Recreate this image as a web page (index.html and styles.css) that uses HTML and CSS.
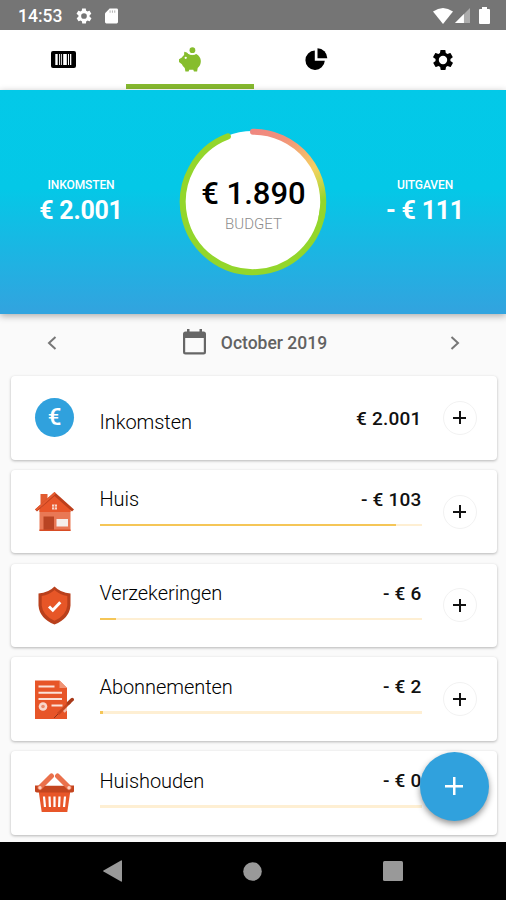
FILE: index.html
```html
<!DOCTYPE html>
<html lang="nl">
<head>
<meta charset="utf-8">
<title>Budget</title>
<link rel="stylesheet" href="styles.css">
</head>
<body>
<div class="app">
  <header class="status">
    <span class="clock">14:53</span>
    <svg class="st-gear" viewBox="0 0 24 24"><path fill-rule="evenodd" d="M19.4 13c0-.3.1-.6.1-1s0-.7-.1-1l2.1-1.6c.2-.2.3-.4.1-.7l-2-3.400c-.1-.3-.4-.3-.6-.3l-2.500 1c-.5-.4-1.100-.7-1.700-1l-.4-2.600c0-.3-.2-.4-.5-.4h-4c-.2 0-.5.2-.5.4l-.4 2.600c-.6.300-1.200.6-1.700 1l-2.500-1c-.2-.1-.5 0-.6.300l-2 3.400c-.1.200-.1.500.1.700L4.600 11c0 .3-.1.600-.1 1s0 .7.1 1l-2.100 1.600c-.2.200-.3.400-.1.700l2 3.400c.1.300.4.300.6.300l2.500-1c.5.400 1.100.7 1.700 1l.4 2.600c0 .3.200.4.500.4h4c.2 0 .5-.2.500-.4l.4-2.600c.6-.3 1.200-.6 1.700-1l2.500 1c.2.100.5 0 .6-.3l2-3.400c.1-.2.1-.5-.1-.7zM12 15.800a3.800 3.800 0 1 1 0-7.600 3.800 3.800 0 0 1 0 7.600z"/></svg>
    <svg class="st-card" viewBox="0 0 14 16"><path d="M5 0h7.500Q14 0 14 1.500v13q0 1.500-1.500 1.500h-11Q0 16 0 14.500V5z"/><path class="slots" d="M5.500 2v2.500M8 2v2.500M10.500 2v2.500"/></svg>
    <span class="spacer"></span>
    <svg class="st-wifi" viewBox="0 0 20 16"><path d="M0 3.500Q10-3.500 20 3.500L10 16z"/></svg>
    <svg class="st-signal" viewBox="0 0 16 16"><path opacity=".4" d="M16 0v16H0z"/><path d="M9.500 6.500V16H0z"/></svg>
    <svg class="st-battery" viewBox="0 0 11 17"><path d="M3 0h5v2h2q1 0 1 1v13q0 1-1 1H1q-1 0-1-1V3q0-1 1-1h2z"/></svg>
  </header>

  <nav class="tabs">
    <div class="tab"><svg width="25" height="17" viewBox="0 0 25 17"><rect width="25" height="17" rx="2"/><path fill="#fff" d="M4.300 3h2.400v11H4.300zM8 3h.9v11H8zM9.900 3h.9v11h-.9zM12.200 3h3.600v11h-3.600zM17 3h1v11h-1zM19 3h1.300v11H19z"/></svg></div>
    <div class="tab active"><svg width="23" height="25" viewBox="0 0 24 26" fill="#86bd2d"><circle cx="14" cy="3.300" r="3"/><path d="M5.500 5q3 .3 4.500 2.200 4 1.800 8 0 4.500 2.500 4.800 7.300 0 4.500-3.300 7.300l-.6 3.700h-3.300l-.7-1.800h-4.200L10 25.500H6.700L6 21.800q-2-1.300-3-3.800L0 15.500v-2.800L3 11q.8-1.500 2.300-2.600z"/><path d="M9.600 6.500Q14 9.300 18.400 6.300" fill="none" stroke="#fff" stroke-width="1"/><circle cx="7" cy="11.300" r="1.200" fill="#fff"/></svg></div>
    <div class="tab"><svg width="23" height="23" viewBox="0 0 23 23"><path d="M9.800 2.500v10.300h10A9.700 9.700 0 1 1 9.800 2.500z"/><path d="M12.500.3a10 10 0 0 1 9.800 9.900h-9.800z"/></svg></div>
    <div class="tab"><svg width="24" height="24" viewBox="0 0 24 24"><path fill-rule="evenodd" d="M19.400 13c0-.3.100-.6.100-1s0-.7-.1-1l2.100-1.600c.2-.2.300-.4.100-.7l-2-3.400c-.1-.3-.4-.3-.6-.3l-2.500 1c-.5-.4-1.100-.7-1.700-1l-.4-2.600c0-.3-.2-.4-.5-.4h-4c-.2 0-.5.200-.5.4l-.4 2.600c-.6.300-1.200.6-1.700 1l-2.500-1c-.2-.1-.5 0-.6.300l-2 3.400c-.1.200-.1.500.1.700L4.600 11c0 .3-.1.600-.1 1s0 .7.100 1l-2.100 1.600c-.2.200-.3.400-.1.700l2 3.400c.1.300.4.300.6.300l2.500-1c.5.400 1.100.7 1.700 1l.4 2.600c0 .3.200.4.500.4h4c.2 0 .5-.2.500-.4l.4-2.600c.6-.3 1.200-.6 1.700-1l2.500 1c.2.100.5 0 .6-.3l2-3.400c.1-.2.100-.5-.1-.7zM12 16.200a4.200 4.200 0 1 1 0-8.400 4.200 4.200 0 0 1 0 8.400z"/></svg></div>
  </nav>

  <section class="hero">
    <div class="stat"><span class="stat-label">INKOMSTEN</span><span class="stat-value">€ 2.001</span></div>
    <div class="ring">
      <svg class="ring-art" viewBox="0 0 148 148">
        <defs><linearGradient id="warm" gradientUnits="userSpaceOnUse" x1="74" y1="3" x2="118" y2="86"><stop offset="0" stop-color="#ef8780"/><stop offset=".25" stop-color="#f2947a"/><stop offset=".65" stop-color="#f5cf62"/><stop offset=".78" stop-color="#d9d44d"/><stop offset="1" stop-color="#93d62b"/></linearGradient></defs>
        <circle cx="74" cy="74" r="71" fill="#fff"/>
        <g fill="none" stroke-width="6" stroke-linecap="round">
          <path stroke="#93d62b" d="M143.900 80.100A70.200 70.200 0 1 1 48.900 8.400"/>
          <path stroke="url(#warm)" d="M74 3.800A70.200 70.200 0 0 1 142.500 89.500"/>
        </g>
      </svg>
      <div class="ring-text"><span class="ring-value">€ 1.890</span><span class="ring-label">BUDGET</span></div>
    </div>
    <div class="stat"><span class="stat-label">UITGAVEN</span><span class="stat-value">- € 111</span></div>
  </section>

  <main class="content">
    <div class="month">
      <svg class="chev" viewBox="0 0 10 14"><path d="M8.500 1 2 7l6.500 6"/></svg>
      <div class="month-name"><svg width="23" height="26" viewBox="0 0 23 26"><path fill="#666" fill-rule="evenodd" d="M4 0h2.500v2.500h10V0H19v2.500h1.500Q23 2.500 23 5v18q0 2.500-2.500 2.500h-18Q0 25.500 0 23V5q0-2.500 2.500-2.500H4zM2.200 9v14.300h18.600V9z"/></svg><span>October 2019</span></div>
      <svg class="chev" viewBox="0 0 10 14"><path d="m1.500 1 6.500 6-6.500 6"/></svg>
    </div>

    <div class="cards">
      <article class="card income">
        <div class="euro">€</div>
        <div class="body"><div class="line"><span class="name">Inkomsten</span><span class="amount">€ 2.001</span></div></div>
        <div class="add"></div>
      </article>

      <article class="card">
        <svg class="icon" viewBox="0 0 39 39"><path fill="#e15b30" d="M5.500 2h7v10h-7z"/><path fill="#e97855" d="M4.500 16h31v23h-31z"/><path fill="#e8562a" d="m19.500 2 16 15v3h-31v-3z"/><path fill="#bd3f1c" d="m19.500 0 19.500 17.500-2 2L19.500 4 2 19.500l-2-2z"/><path fill="#e65b30" d="m19.500 0 1.500 1.500L2 18.500l-2-1z"/><path fill="#b94423" d="M8.500 24.500H19V39H8.500z"/><path fill="#d74c24" d="M4.500 37.500h31V39h-31z"/><path fill="#f5efec" d="M21.500 27H33v7.500H21.500z"/><path fill="#f7d9ce" d="M17 12.500h5v5h-5z"/><path stroke="#e8562a" stroke-width=".7" d="M19.500 12.500v5M17 15h5"/></svg>
        <div class="body"><div class="line"><span class="name">Huis</span><span class="amount">- € 103</span></div><div class="bar"><div class="fill" style="width:92%"></div></div></div>
        <div class="add"></div>
      </article>

      <article class="card">
        <svg class="icon" viewBox="0 0 39 39"><path fill="#b9401c" d="M19.500.5q6 6.300 16 7v12q-1 13-16 19-15-6-16-19v-12q10-.7 16-7z"/><path fill="#e75627" d="M19.500 4q5.500 5 12.800 6v9.500q-1 10-12.800 15.300Q7.700 29.500 6.700 19.500V10q7.300-1 12.800-6z"/><path fill="none" stroke="#fff" stroke-width="3" d="m14 20.500 3.800 3.700 7.500-8"/></svg>
        <div class="body"><div class="line"><span class="name">Verzekeringen</span><span class="amount">- € 6</span></div><div class="bar"><div class="fill" style="width:5%"></div></div></div>
        <div class="add"></div>
      </article>

      <article class="card">
        <svg class="icon" viewBox="0 0 39 39"><path fill="#e75528" d="M0 .5h24.500L32 8v31H0z"/><path fill="#ef9476" d="M24.500.5 32 8h-7.500z"/><path stroke="#fbe1d7" stroke-width="2" d="M3.500 6.500h16M3.500 12.800H27M3.500 19H27M16.500 25.500h11"/><circle cx="8" cy="26.500" r="4.300" fill="#f9d8cc"/><circle cx="8" cy="26.500" r="1.800" fill="#ed8c6c"/><path stroke="#fff" stroke-width="5" d="m28 31 5-5" opacity=".6"/><path stroke="#c8451e" stroke-width="2.800" d="m23 34 12-12"/><path stroke="#a83a1a" stroke-width="3.500" stroke-linecap="round" d="m33.500 23 3.700-3.500"/><path stroke="#8f351d" d="m19 38 4-4"/></svg>
        <div class="body"><div class="line"><span class="name">Abonnementen</span><span class="amount">- € 2</span></div><div class="bar"><div class="fill" style="width:1%"></div></div></div>
        <div class="add"></div>
      </article>

      <article class="card">
        <svg class="icon" viewBox="0 0 39 39"><path fill="#e85629" d="M3.500 17h32L32.300 39H6.700z"/><path fill="#c4451f" d="M0 12.500h39v6q-1 1-2 1H2q-1 0-2-1z"/><path fill="#fff" d="M19.500 5 9 12.500h21z"/><path stroke="#ea704b" stroke-width="5" stroke-linecap="round" d="M5 14.500 16.500 3M34 14.500 22.500 3"/><path stroke="#fff" stroke-width="2.200" d="M9 23.500 10 34M14.500 23.500l.4 10.500M19.500 23.500V34M24.500 23.500l-.4 10.500M30 23.500 29 34"/><circle cx="5" cy="14.700" r="1.700" fill="#ffd1c0"/><circle cx="34" cy="14.700" r="1.700" fill="#ffd1c0"/></svg>
        <div class="body"><div class="line"><span class="name">Huishouden</span><span class="amount">- € 0</span></div><div class="bar"><div class="fill" style="width:0%"></div></div></div>
        <div class="add"></div>
      </article>
    </div>
    <div class="fab"></div>
  </main>

  <footer class="navbar">
    <svg width="19" height="22" viewBox="0 0 19 22"><path d="M18 .5q1-.5 1 .5v20q0 1-1 .5L.5 11.500q-.8-.5 0-1z"/></svg>
    <svg width="19" height="19" viewBox="0 0 19 19"><circle cx="9.500" cy="9.500" r="9.300"/></svg>
    <svg width="20" height="20" viewBox="0 0 20 20"><rect width="20" height="20" rx="1.500"/></svg>
  </footer>
</div>
</body>
</html>
```
FILE: styles.css
```css
* { box-sizing: border-box; }
body { margin: 0; font-family: Roboto, sans-serif; color: #111; }
svg { display: block; flex: none; }
.app { width: 506px; height: 900px; display: flex; flex-direction: column; background: #fafafa; overflow: hidden; }

.status { height: 30px; flex: none; background: #757575; display: flex; align-items: center; padding: 1px 16px 0 18px; fill: #fff; color: #fff; }
.clock { font-size: 17.500px; font-weight: 500; width: 57px; line-height: 28px; }
.st-gear { width: 18px; height: 18px; margin-right: 12px; }
.st-card { width: 13px; height: 16px; }
.slots { stroke: #aaa; stroke-width: 1; }
.spacer { flex: 1; }
.st-wifi { width: 20px; height: 16px; }
.st-signal { width: 15px; height: 15px; margin: 0 9px 0 2px; }
.st-battery { width: 11px; height: 17px; }

.tabs { height: 59.500px; flex: none; display: flex; background: #fff; }
.tab { flex: 1; display: flex; align-items: center; justify-content: center; }
.tab.active { border-bottom: 5px solid #86b92f; padding: 5px 0 0 1px; height: 59px; }

.hero { height: 224.500px; flex: none; display: flex; justify-content: space-between; align-items: center; background: linear-gradient(#03c9e8 0%, #04c8e7 44%, #31a4df 98%); box-shadow: 0 2px 7px rgba(0,0,0,.32); position: relative; }
.stat { width: 162px; display: flex; flex-direction: column; align-items: center; color: #fff; padding-top: 3px; }
.stat-label { font-size: 12px; line-height: 16px; font-weight: 500; letter-spacing: -.1px; }
.stat-value { font-size: 25px; line-height: 36px; font-weight: 700; letter-spacing: -.25px; }
.ring { width: 148px; height: 148px; display: grid; }
.ring-art, .ring-text { grid-area: 1 / 1; width: 148px; height: 148px; }
.ring-text { display: flex; flex-direction: column; align-items: center; padding: 48px 0 0 1px; z-index: 1; }
.ring-value { font-size: 31px; line-height: 36px; font-weight: 500; color: #000; }
.ring-label { font-size: 15px; line-height: 24px; color: #8c8c8c; font-weight: 300; }

.content { flex: 1; min-height: 0; position: relative; }
.month { height: 62px; display: flex; align-items: center; justify-content: space-between; padding: 0 46px 5px 47px; }
.chev { width: 10px; height: 14px; fill: none; stroke: #777; stroke-width: 2; }
.month-name { display: flex; align-items: center; gap: 15px; padding-left: 3px; font-size: 17.500px; font-weight: 500; color: #626262; }
.month-name svg { margin-top: -2px; }
.cards { display: flex; flex-direction: column; gap: 10.250px; padding: 0 9.500px 0 10.500px; }
.card { height: 83.500px; background: #fff; border-radius: 4px; box-shadow: 0 1px 3px rgba(0,0,0,.28); display: flex; align-items: center; padding: 0 20px 0 24.500px; }
.icon, .euro { width: 39px; height: 39px; flex: none; margin-right: 25.500px; }
.euro { border-radius: 50%; background: #30a1dd; color: #fff; font-size: 24px; font-weight: 500; line-height: 39px; text-align: center; }
.body { flex: 1; align-self: stretch; padding-top: 17.500px; }
.line { display: flex; justify-content: space-between; align-items: center; height: 24px; }
.name { font-size: 20px; font-weight: 300; letter-spacing: -.06px; color: #000; }
.amount { font-size: 19px; font-weight: 500; letter-spacing: .2px; color: #111; }
.income .body { padding-top: 30px; }
.income .name { padding-top: 7px; }
.bar { height: 2.500px; margin-top: 12.500px; background: #feefd3; }
.fill { height: 100%; background: #f5c657; }
.add { width: 34px; height: 34px; flex: none; margin-left: 21px; border: 1px solid #f2f2f2; border-radius: 50%; background: linear-gradient(#111, #111) center / 13px 2px no-repeat, linear-gradient(#111, #111) center / 2px 13px no-repeat; }
.fab { position: absolute; right: 17.500px; top: 437.500px; width: 69px; height: 69px; border-radius: 50%; background: linear-gradient(#fff, #fff) center / 18px 2.500px no-repeat, linear-gradient(#fff, #fff) center / 2.500px 18px no-repeat, #30a1dd; box-shadow: 0 3px 6px rgba(0,0,0,.42); }
.navbar { height: 58px; flex: none; display: flex; align-items: center; justify-content: space-between; padding: 0 103px; background: #000; fill: #999; }
```
